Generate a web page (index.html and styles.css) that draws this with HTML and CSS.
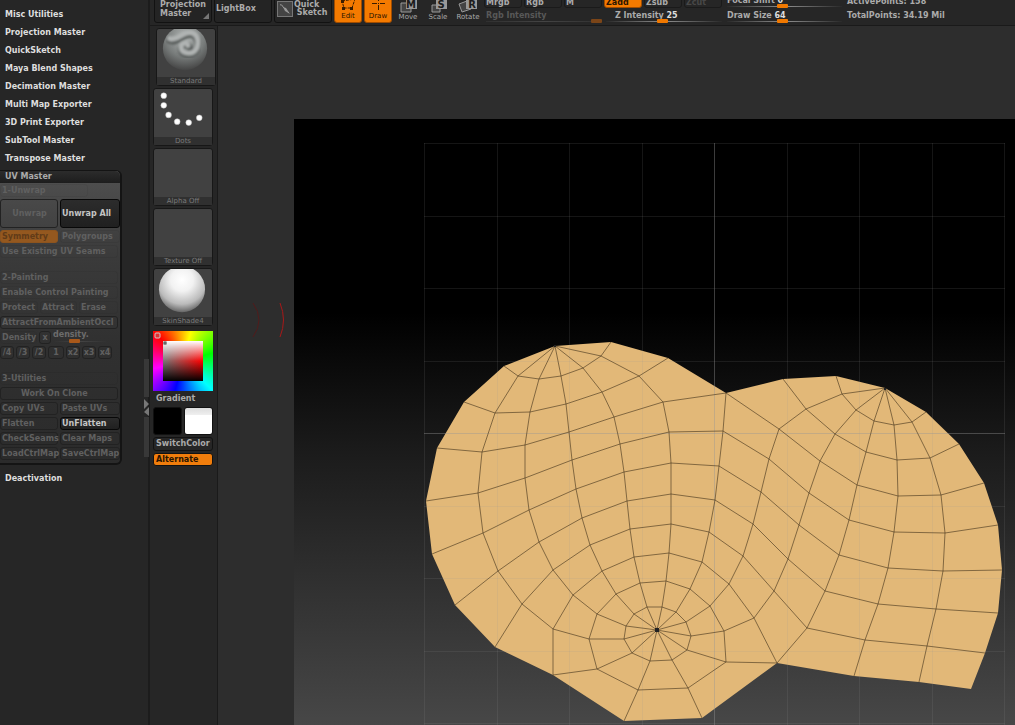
FILE: index.html
```html
<!DOCTYPE html>
<html lang="en">
    <head>
        <meta charset="utf-8">
        <title>UV Master</title>
        <link rel="stylesheet" href="styles.css">
    </head>
    <body>
        <!-- plugin tray -->
        <aside class="tray">
            <ul class="menu">
                <li><a href="#">Misc Utilities</a></li>
                <li><a href="#">Projection Master</a></li>
                <li><a href="#">QuickSketch</a></li>
                <li><a href="#">Maya Blend Shapes</a></li>
                <li><a href="#">Decimation Master</a></li>
                <li><a href="#">Multi Map Exporter</a></li>
                <li><a href="#">3D Print Exporter</a></li>
                <li><a href="#">SubTool Master</a></li>
                <li><a href="#">Transpose Master</a></li>
            </ul>
            <section class="palette">
                <h2>UV Master</h2>
                <div class="palette-body">
                    <button class="off flat short">1-Unwrap</button>
                    <div class="row tall">
                        <button class="off center">Unwrap</button>
                        <button class="on">Unwrap All</button>
                    </div>
                    <div class="row">
                        <button class="off orange">Symmetry</button>
                        <button class="off flat">Polygroups</button>
                    </div>
                    <button class="off flat">Use Existing UV Seams</button>
                    <button class="off flat group">2-Painting</button>
                    <button class="off flat">Enable Control Painting</button>
                    <div class="row trio">
                        <button class="off flat">Protect</button>
                        <button class="off flat">Attract</button>
                        <button class="off flat">Erase</button>
                    </div>
                    <button class="off">AttractFromAmbientOccl</button>
                    <div class="row density">
                        <button class="off flat">Density</button>
                        <button class="off mini">x</button>
                        <div class="slider dim">
                            <label for="density">density.</label>
                            <input type="range" id="density" value="36">
                        </div>
                    </div>
                    <div class="row factors">
                        <button class="off mini">/4</button>
                        <button class="off mini">/3</button>
                        <button class="off mini">/2</button>
                        <button class="off mini wide">1</button>
                        <button class="off mini">x2</button>
                        <button class="off mini">x3</button>
                        <button class="off mini">x4</button>
                    </div>
                    <button class="off flat group">3-Utilities</button>
                    <button class="off clone">Work On Clone</button>
                    <div class="row">
                        <button class="off">Copy UVs</button>
                        <button class="off">Paste UVs</button>
                    </div>
                    <div class="row">
                        <button class="off">Flatten</button>
                        <button class="on">UnFlatten</button>
                    </div>
                    <div class="row">
                        <button class="off">CheckSeams</button>
                        <button class="off">Clear Maps</button>
                    </div>
                    <div class="row">
                        <button class="off">LoadCtrlMap</button>
                        <button class="off">SaveCtrlMap</button>
                    </div>
                </div>
            </section>
            <ul class="menu last">
                <li><a href="#">Deactivation</a></li>
            </ul>
            <svg class="divider" width="5" height="98" viewBox="0 0 5 98">
                <path fill="#383838" d="M0 0h5v38h-5zM0 58h5v40h-5z"/>
                <path fill="#777" d="M0 40l5 5-5 5zM5 48v9l-5-4z"/>
            </svg>
        </aside>

        <main class="main">
            <!-- top shelf -->
            <header class="shelf">
                <button class="tool projection">Projection<br>Master
                    <svg width="6" height="6" viewBox="0 0 6 6"><path fill="#777" d="M6 0v6H0z"/></svg>
                </button>
                <button class="tool lightbox">LightBox</button>
                <button class="tool sketch">
                    <svg width="16" height="16" viewBox="0 0 16 16">
                        <rect x=".5" y=".5" width="15" height="15" fill="#444" stroke="#777"/>
                        <path d="M3 4c2-1 2 1 4 3l5 5" fill="none" stroke="#aaa"/>
                        <path d="M6 6l3 1 4 6-5-3z" fill="#999"/>
                    </svg>
                    <span>Quick<br>&nbsp;Sketch</span>
                </button>
                <button class="mode active">
                    <svg width="20" height="20" viewBox="0 0 20 20">
                        <path d="M4 9L17 7l-3 9H6z" fill="none" stroke="#3b1d00" stroke-dasharray="3 1"/>
                        <path d="M3 8h3v3H3zM15 5h3v3h-3zM4 15h3v3H4zM12 15h3v3h-3z" fill="#3b1d00"/>
                    </svg>
                    Edit
                </button>
                <button class="mode active">
                    <svg width="20" height="20" viewBox="0 0 20 20">
                        <path d="M10.500 3v6M10.500 13v5M4 11.500h5M12 11.500h5" fill="none" stroke="#3b1d00"/>
                        <path d="M10 11h1v1h-1z" fill="#3b1d00"/>
                    </svg>
                    Draw
                </button>
                <button class="mode">
                    <svg width="22" height="20" viewBox="0 0 22 20">
                        <path d="M4 10h10v9H4z" fill="#444" stroke="#999"/>
                        <rect x="9" y="6" width="11" height="10" fill="#999"/>
                        <text x="14" y="15">M</text>
                    </svg>
                    Move
                </button>
                <button class="mode">
                    <svg width="22" height="20" viewBox="0 0 22 20">
                        <path d="M5 12h8v7H5z" fill="#444" stroke="#999"/>
                        <rect x="9" y="6" width="11" height="10" fill="#999"/>
                        <text x="14" y="15">S</text>
                    </svg>
                    Scale
                </button>
                <button class="mode">
                    <svg width="22" height="20" viewBox="0 0 22 20">
                        <path d="M2 11l8-3 4 8-9 3z" fill="#444" stroke="#999"/>
                        <rect x="9" y="6" width="11" height="10" fill="#999"/>
                        <text x="15" y="15">R</text>
                    </svg>
                    Rotate
                </button>
                <div class="channels">
                    <button class="chip">Mrgb</button>
                    <button class="chip">Rgb</button>
                    <button class="chip">M</button>
                    <button class="chip lit">Zadd</button>
                    <button class="chip">Zsub</button>
                    <button class="chip gone">Zcut</button>
                    <div class="slider dim">
                        <label for="rgb">Rgb Intensity</label>
                        <input type="range" id="rgb" value="100">
                    </div>
                    <div class="slider inset">
                        <label for="z">Z Intensity <b>25</b></label>
                        <input type="range" id="z" value="49">
                    </div>
                </div>
                <div class="sizes">
                    <div class="slider">
                        <label for="focal">Focal Shift <b>0</b></label>
                        <input type="range" id="focal" value="48">
                    </div>
                    <div class="slider">
                        <label for="size">Draw Size <b>64</b></label>
                        <input type="range" id="size" value="48">
                    </div>
                </div>
                <div class="info">
                    <p>ActivePoints: 158</p>
                    <p>TotalPoints: 34.19 Mil</p>
                </div>
            </header>

            <div class="stage">
                <!-- left shelf -->
                <nav class="side">
                    <button class="thumb brush">
                        <svg width="56" height="50" viewBox="0 0 56 50">
                            <defs>
                                <radialGradient id="clay" cx=".5" cy=".25" r=".75">
                                    <stop offset="0" stop-color="#b2b6b5"/>
                                    <stop offset=".6" stop-color="#777b7a"/>
                                    <stop offset="1" stop-color="#444"/>
                                </radialGradient>
                                <filter id="soft"><feGaussianBlur stdDeviation="1"/></filter>
                            </defs>
                            <circle cx="28" cy="20" r="23" fill="url(#clay)"/>
                            <g fill="none" stroke-linecap="round" filter="url(#soft)">
                                <path d="M12 12c8 4 14-8 23-6 8 2 8 14 3 19-5 4-14 2-14-4 0-5 8-6 9-1" stroke="#5c605f" stroke-width="7"/>
                                <path d="M12 10c8 3 14-8 23-6 8 2 8 14 3 19-5 4-14 2-14-4 0-5 6-6 7-2" stroke="#b0b4b3" stroke-width="5"/>
                            </g>
                        </svg>
                        <span>Standard</span>
                    </button>
                    <button class="thumb">
                        <svg width="56" height="50" viewBox="0 0 56 50">
                            <g fill="#fff" stroke="#bbb" stroke-width=".5">
                                <circle cx="9" cy="7" r="3"/><circle cx="9" cy="17" r="3"/>
                                <circle cx="14" cy="27" r="3"/><circle cx="23" cy="34" r="3"/>
                                <circle cx="35" cy="35" r="3"/><circle cx="46" cy="30" r="3"/>
                            </g>
                        </svg>
                        <span>Dots</span>
                    </button>
                    <button class="thumb"><span>Alpha Off</span></button>
                    <button class="thumb"><span>Texture Off</span></button>
                    <button class="thumb">
                        <svg width="56" height="50" viewBox="0 0 56 50">
                            <defs>
                                <radialGradient id="skin" cx=".5" cy=".3" r=".7">
                                    <stop offset="0" stop-color="#fff"/>
                                    <stop offset=".35" stop-color="#f2f2f2"/>
                                    <stop offset=".75" stop-color="#bbb"/>
                                    <stop offset="1" stop-color="#666"/>
                                </radialGradient>
                            </defs>
                            <circle cx="28" cy="21" r="24" fill="url(#skin)"/>
                        </svg>
                        <span>SkinShade4</span>
                    </button>
                    <div class="picker">
                        <div class="shade"></div>
                        <svg width="60" height="60" viewBox="0 0 60 60">
                            <rect x="2" y="2" width="5" height="5" rx="1" fill="#d33" stroke="#ccc"/>
                            <rect x="11" y="11" width="2" height="2" fill="#fff" stroke="#333"/>
                        </svg>
                    </div>
                    <button class="label plain">Gradient</button>
                    <div class="swatches">
                        <button class="black" aria-label="Secondary color"></button>
                        <button class="white" aria-label="Main color"></button>
                    </div>
                    <button class="label">SwitchColor</button>
                    <button class="label alternate">Alternate</button>
                </nav>

                <div class="workspace">
                    <svg class="cursor" width="34" height="36" viewBox="0 0 34 36" fill="none">
                        <path d="M1 1q12 17 0 34" stroke="#521b1b"/>
                        <path d="M28 1q7 17 0 34" stroke="#a81818"/>
                    </svg>
                    <div class="document">
                        <svg width="100%" height="100%" viewBox="294 119 721 606" preserveAspectRatio="xMinYMin slice">
                            <!-- unwrapped shell -->
                            <path class="shell" d="M555 346L611 342L668 358L726 393L783 379L836 376L885 388L926 412L959 444L984 483L998 525L1002 570L998 613L985 653L971 689L919 682L854 676L777 663L702 718L624 721L553 675L495 647L455 605L432 554L426 501L437 448L464 402L504 366Z"/>
                            <!-- uv grid -->
                            <path class="grid" d="M424.5 143V725M497.5 143V725M569.5 143V725M642.5 143V725M787.5 143V725M859.5 143V725M932.5 143V725M1004.5 143V725M424 143.5H1005M424 216.5H1005M424 288.5H1005M424 361.5H1005M424 506.5H1005M424 578.5H1005M424 651.5H1005M424 723.5H1005"/>
                            <path class="grid axis" d="M714.5 143V725M424 433.5H1005"/>
                            <g class="wire">
                                <!-- rows -->
                                <path d="M504 366L518 376L539 379L561 376L583 368L601 356L611 342"/>
                                <path d="M464 402L495 413L530 412L566 404L602 392L639 376L668 358"/>
                                <path d="M437 448L482 452L525 445L569 432L614 417L663 402L726 393L779 429L820 461L857 485L898 496L941 495L984 483"/>
                                <path d="M426 501L478 493L525 478L572 460L620 444L669 432L723 431L769 459L809 493L849 520L894 532L945 533L998 525"/>
                                <path d="M432 554L483 533L529 510L576 489L624 472L671 463L719 466L761 492L799 525L839 555L888 568L943 571L1002 570"/>
                                <path d="M455 605L498 571L539 542L582 518L627 501L671 494L715 500L753 524L788 559L825 591L878 604L936 609L998 613"/>
                                <path d="M495 647L522 604L553 570L590 545L630 529L671 524L709 532L743 556L774 591L807 628L865 640L927 646L985 653"/>
                                <path d="M553 675L553 629L573 595L602 571L634 557L669 553L702 562L729 584L754 618L777 663"/>
                                <path d="M783 379L806 409L835 434L866 452L897 460L930 458L959 444"/>
                                <path d="M836 376L842 394L856 410L874 421L894 425L912 422L926 412"/>
                                <!-- rings round the bottom pole -->
                                <path d="M597 614L616 594L640 583L666 581L690 589L710 606L724 631L726 662L688 688L638 690L597 669L589 639Z"/>
                                <path d="M634 614L647 607L662 607L676 612L686 622L691 636L687 650L672 660L650 661L632 653L624 639L626 626Z"/>
                                <!-- columns -->
                                <path d="M555 346L518 376L495 413L482 452L478 493L483 533L498 571L522 604L553 629L589 639L624 639L657 630"/>
                                <path d="M555 346L539 379L530 412L525 445L525 478L529 510L539 542L553 570L573 595L597 614L626 626L657 630"/>
                                <path d="M555 346L561 376L566 404L569 432L572 460L576 489L582 518L590 545L602 571L616 594L634 614L657 630"/>
                                <path d="M555 346L583 368L602 392L614 417L620 444L624 472L627 501L630 529L634 557L640 583L647 607L657 630"/>
                                <path d="M555 346L601 356L639 376L663 402L669 432L671 463L671 494L671 524L669 553L666 581L662 607L657 630"/>
                                <path d="M726 393L723 431L719 466L715 500L709 532L702 562L690 589L676 612L657 630"/>
                                <path d="M885 388L842 394L806 409L779 429L769 459L761 492L753 524L743 556L729 584L710 606L686 622L657 630"/>
                                <path d="M885 388L856 410L835 434L820 461L809 493L799 525L788 559L774 591L754 618L724 631L691 636L657 630"/>
                                <path d="M885 388L874 421L866 452L857 485L849 520L839 555L825 591L807 628L777 663L726 662L687 650L657 630"/>
                                <path d="M885 388L894 425L897 460L898 496L894 532L888 568L878 604L865 640L854 676"/>
                                <path d="M885 388L912 422L930 458L941 495L945 533L943 571L936 609L927 646L919 682"/>
                                <path d="M657 630L672 660L688 688L702 718M657 630L650 661L638 690L624 721M657 630L632 653L597 669L553 675"/>
                            </g>
                            <path class="pole" d="M655 628h4v4h-4zM554 345h2v2h-2zM884 388h2v2h-2z"/>
                        </svg>
                    </div>
                </div>
            </div>
        </main>
    </body>
</html>
```
FILE: styles.css
```css
*{
    box-sizing: border-box;
    margin: 0;
    padding: 0;
}
body{
    display: flex;
    height: 100vh;
    overflow: hidden;
    background: #262626;
    color: #ababab;
    font: bold 8px/10px "DejaVu Sans", sans-serif;
}
button{
    border: 0;
    background: none;
    color: inherit;
    font: inherit;
    text-align: left;
    white-space: nowrap;
}
a{
    color: #dedede;
    text-decoration: none;
}
svg{
    display: block;
}

/* plugin tray */
.tray{
    position: relative;
    flex: none;
    width: 150px;
    padding-top: 6px;
    border-right: 2px solid #1c1c1c;
}
.menu{
    list-style: none;
    padding-left: 5px;
    line-height: 18px;
}
.last{
    margin-top: 5px;
}
.palette{
    width: 122px;
    margin-top: 2px;
    border: solid #141414;
    border-width: 1px 2px 2px 0;
    border-radius: 0 6px 6px 0;
    background: linear-gradient(#505050, #3a3a3a 30%, #303030 60%, #2b2b2b);
}
.palette h2{
    height: 12px;
    padding-left: 5px;
    border-radius: 0 5px 0 0;
    background: linear-gradient(#2c2c2c, #1d1d1d);
    font: inherit;
    line-height: 12px;
}
.palette-body{
    display: flex;
    flex-direction: column;
    gap: 2px;
    padding: 1px 2px 3px 0;
}
.palette button{
    height: 13px;
    padding-left: 1px;
    border: 1px solid #222;
    border-radius: 3px;
    line-height: 11px;
}
.palette .off{
    color: #606060;
}
.palette .flat{
    border-color: rgba(0, 0, 0, .05);
}
.palette .on{
    border-color: #080808;
    background: linear-gradient(#2c2c2c, #202020);
    color: #c4c4c4;
}
.palette .orange{
    border-color: #8d541e;
    background: #94581f;
    color: #613b18;
}
.palette .short{
    width: 88px;
}
.palette .group{
    margin-top: 11px;
}
.palette .center{
    text-align: center;
}
.palette .clone{
    padding-left: 20px;
}
.row{
    display: grid;
    grid-template-columns: 58px 60px;
    column-gap: 2px;
}
.tall button{
    height: 29px;
}
.trio{
    grid-template-columns: 38px 37px 1fr;
}
.density{
    grid-template-columns: 37px 12px 1fr;
}
.density .slider{
    margin: -1px 10px 0 0;
}
.factors{
    grid-template-columns: 14px 14px 14px 16px 14px 14px 14px;
}
.palette .mini{
    padding: 0;
    text-align: center;
}
.divider{
    position: absolute;
    right: -1px;
    top: 359px;
}

/* sliders */
.slider label{
    display: block;
    height: 9px;
    line-height: 12px;
}
.slider b{
    color: #ddd;
}
.slider input{
    display: block;
    width: 100%;
    height: 4px;
    appearance: none;
    background: linear-gradient(90deg, #2a2a2a, #909090 50%, #2a2a2a) center / 100% 1px no-repeat;
}
.slider input::-webkit-slider-thumb{
    appearance: none;
    width: 11px;
    height: 4px;
    border-radius: 1px;
    background: #f07800;
}
.dim label{
    color: #585858;
}
.dim input{
    background-image: linear-gradient(90deg, #303030, #444, #303030);
}
.dim input::-webkit-slider-thumb{
    background: #7b4518;
}
.density .slider label{
    line-height: 10px;
    color: #6c6c6c;
}
.density .slider input::-webkit-slider-thumb{
    background: #a8581a;
}

/* top shelf */
.main{
    display: flex;
    flex: 1;
    flex-direction: column;
    min-width: 0;
}
.shelf{
    display: flex;
    flex: none;
    align-items: flex-end;
    height: 26px;
    padding: 0 0 2px 4px;
    border-bottom: 1px solid #1a1a1a;
}
.tool{
    position: relative;
    flex: none;
    width: 58px;
    height: 32px;
    margin-right: 2px;
    padding: 3px 0 0 5px;
    border: 1px solid #121212;
    border-radius: 3px;
    background: #242424;
    line-height: 9px;
}
.projection svg{
    position: absolute;
    right: 2px;
    bottom: 3px;
}
.lightbox{
    padding-left: 1px;
}
.sketch{
    display: flex;
    align-items: center;
    gap: 1px;
    padding-left: 2px;
    line-height: 8px;
}
.mode{
    display: flex;
    flex: none;
    flex-direction: column;
    align-items: center;
    justify-content: flex-end;
    width: 28px;
    height: 32px;
    margin-right: 2px;
    padding-bottom: 1px;
    font-size: 7px;
    font-weight: normal;
    line-height: 9px;
}
.mode text{
    fill: #1c1c1c;
    font-size: 10px;
    font-weight: bold;
    text-anchor: middle;
}
.active{
    border: 1px solid #a04c00;
    border-radius: 3px;
    background: #f47a00;
    color: #2a1400;
}
.channels{
    display: grid;
    flex: none;
    grid-template-columns: repeat(6, 38px);
    column-gap: 2px;
}
.chip{
    height: 14px;
    margin-bottom: 2px;
    padding: 3px 0 0 1px;
    border: 1px solid #1a1a1a;
    border-radius: 3px;
    line-height: 9px;
}
.chip.lit{
    border-color: #a04c00;
    background: #f47a00;
    color: #2a1400;
}
.chip.gone{
    color: #484848;
}
.channels .slider{
    grid-column: span 3;
    padding-left: 2px;
}
.channels .inset label{
    padding-left: 9px;
}
.sizes{
    display: grid;
    flex: none;
    gap: 2px;
    width: 115px;
    margin-left: 5px;
}
.info{
    margin-left: 5px;
    line-height: 14px;
    white-space: nowrap;
}

/* left shelf */
.stage{
    display: flex;
    flex: 1;
    min-height: 0;
}
.side{
    display: flex;
    flex: none;
    flex-direction: column;
    gap: 2px;
    width: 68px;
    padding: 2px 4px 0 3px;
    border-right: 1px solid #1a1a1a;
}
.thumb{
    display: flex;
    flex: none;
    flex-direction: column;
    width: 60px;
    height: 58px;
    border: 1px solid #171717;
    border-radius: 3px;
    background: #414141;
}
.side .brush{
    margin-left: 3px;
}
.thumb span{
    width: 100%;
    height: 8px;
    margin-top: auto;
    background: #303030;
    color: #7a7a7a;
    font-size: 7px;
    font-weight: normal;
    line-height: 9px;
    text-align: center;
}
.picker{
    position: relative;
    flex: none;
    width: 60px;
    height: 60px;
    margin-top: 3px;
    padding: 10px;
    background: conic-gradient(from -45deg, red, yellow, lime, cyan, blue, magenta, red);
}
.picker svg{
    position: absolute;
    left: 0;
    top: 0;
}
.shade{
    height: 40px;
    background: linear-gradient(#fff, transparent 50%, #000), linear-gradient(90deg, #777, #f00);
}
.label{
    height: 14px;
    padding-left: 2px;
    border: 1px solid #121212;
    border-radius: 3px;
}
.plain{
    height: 12px;
    border-color: #262626;
}
.alternate{
    height: 13px;
    background: #f07d0c;
    color: #2a1400;
}
.swatches{
    display: grid;
    grid-template-columns: 1fr 1fr;
    gap: 2px;
    height: 28px;
}
.swatches button{
    border: 1px solid #111;
    border-radius: 3px;
}
.black{
    background: #000;
}
.white{
    background: linear-gradient(#ddd, #eee 25%, #fff 26%);
}

/* document */
.workspace{
    position: relative;
    flex: 1;
    min-width: 0;
    padding: 93px 0 0 76px;
    background: #2d2d2d;
}
.cursor{
    position: absolute;
    left: 34px;
    top: 276px;
}
.document{
    height: 100%;
    background: linear-gradient(#000 32%, #1b1b1b 55%, #474747);
}
.shell{
    fill: #e2b878;
}
.grid{
    fill: none;
    stroke: #969696;
    stroke-opacity: .14;
}
.axis{
    stroke-opacity: .4;
}
.wire{
    fill: none;
    stroke: #4a3820;
    stroke-opacity: .8;
    stroke-width: .8;
}
.pole{
    fill: #222;
}
```
